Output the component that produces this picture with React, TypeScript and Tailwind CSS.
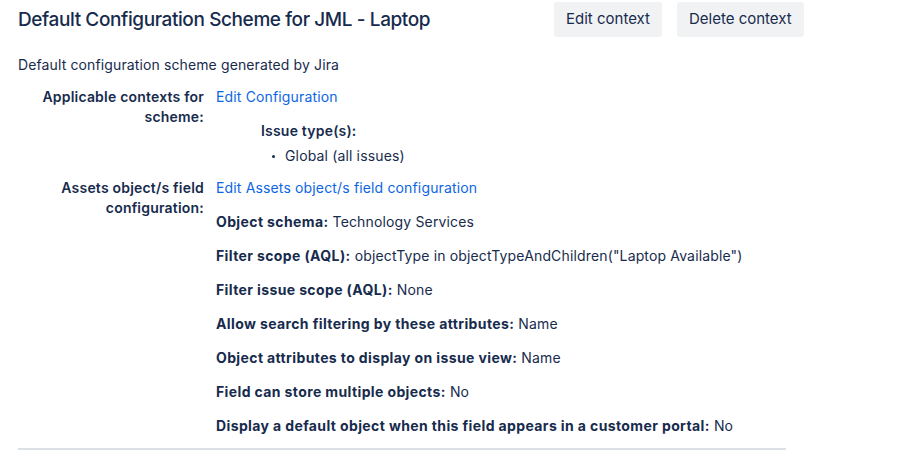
import React from "react";

const rows: [string, string][] = [
  ["Object schema:", "Technology Services"],
  ["Filter scope (AQL):", 'objectType in objectTypeAndChildren("Laptop Available")'],
  ["Filter issue scope (AQL):", "None"],
  ["Allow search filtering by these attributes:", "Name"],
  ["Object attributes to display on issue view:", "Name"],
  ["Field can store multiple objects:", "No"],
  ["Display a default object when this field appears in a customer portal:", "No"],
];

export default function App() {
  return (
    <div
      className="bg-white text-[#172B4D] w-[904px] h-[454px] overflow-hidden pl-[18px]"
      style={{ fontFamily: "Inter, 'Noto Sans', sans-serif" }}
    >
      <div className="flex items-start pt-[2px]">
        <h1 className="w-[536px] text-[19px] leading-[24px] font-medium tracking-[-0.4px] pt-[6px] text-[#172B4D]">
          Default Configuration Scheme for JML - Laptop
        </h1>
        <div className="flex gap-[15px]">
          <button className="h-[35px] px-[12px] rounded-[3px] bg-[#F1F2F4] text-[15px] text-[#172B4D]">
            Edit context
          </button>
          <button className="h-[35px] px-[12px] rounded-[3px] bg-[#F1F2F4] text-[15px] text-[#172B4D]">
            Delete context
          </button>
        </div>
      </div>
      <p className="text-[14px] leading-[20px] mt-[18px] tracking-[0.12px]">Default configuration scheme generated by Jira</p>
      <div className="grid grid-cols-[186px_1fr] gap-x-[12px] mt-[12px] text-[14px] leading-[20px] tracking-[0.15px]">
        <div className="text-right font-semibold tracking-[0.2px]">Applicable contexts for scheme:</div>
        <div>
          <a className="text-[#0C66E4]">Edit Configuration</a>
          <div className="pl-[45px] mt-[14px]">
            <div className="font-semibold tracking-[0.2px]">Issue type(s):</div>
            <ul className="mt-[5px] pl-[24px]">
              <li className="flex items-center">
                <span className="w-[3px] h-[3px] rounded-full bg-[#172B4D] -ml-[13px] mr-[10px]" />
                Global (all issues)
              </li>
            </ul>
          </div>
        </div>
        <div className="text-right font-semibold tracking-[0.2px] mt-[12px]">Assets object/s field configuration:</div>
        <div className="mt-[12px]">
          <a className="text-[#0C66E4]">Edit Assets object/s field configuration</a>
          <div className="flex flex-col gap-[14px] mt-[14px]">
            {rows.map(([k, v]) => (
              <div key={k}>
                <span className="font-bold tracking-[0.38px]">{k}</span> {v}
              </div>
            ))}
          </div>
        </div>
      </div>
      <div className="w-[768px] h-[2px] bg-[#DCDFE4] mt-[12px]" />
    </div>
  );
}
